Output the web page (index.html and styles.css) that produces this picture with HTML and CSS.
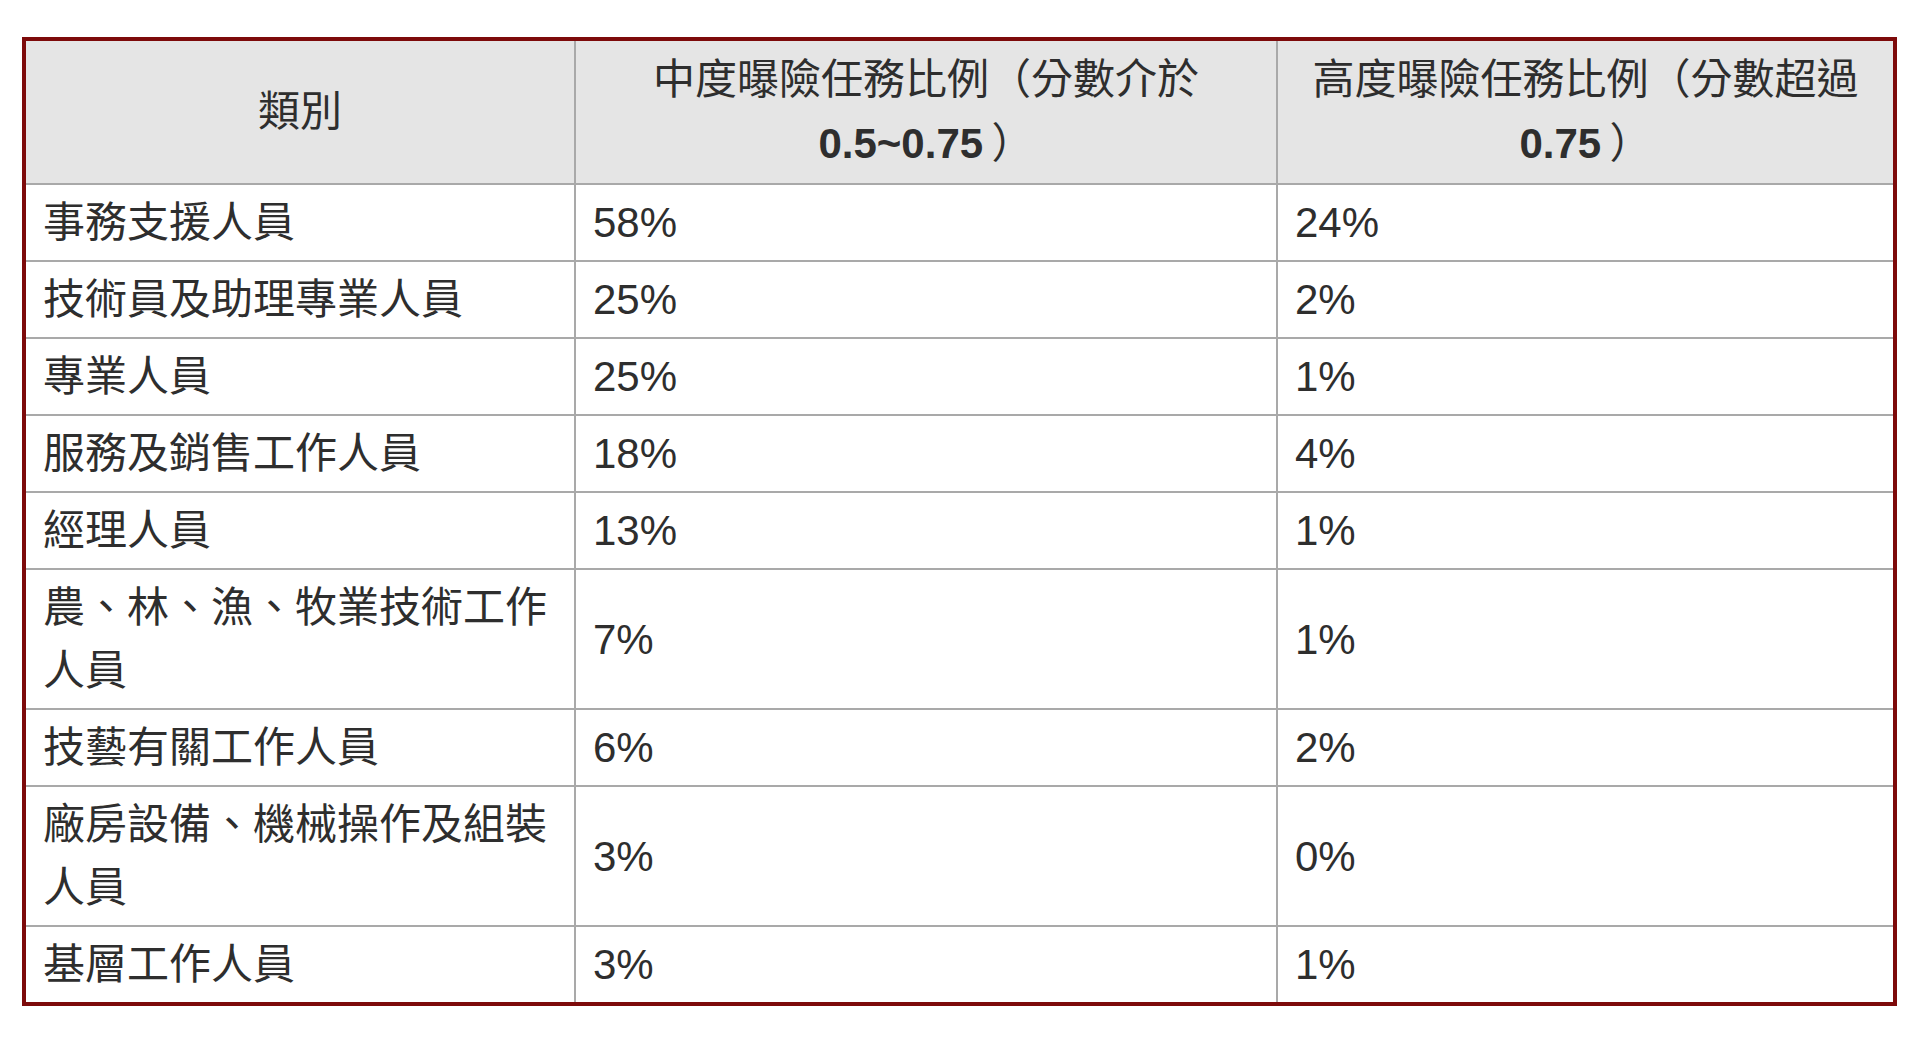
FILE: index.html
```html
<!DOCTYPE html>
<html lang="zh-Hant">
<head>
<meta charset="utf-8">
<title>曝險任務比例</title>
<link rel="stylesheet" href="styles.css">
</head>
<body>
<table class="data-table">
  <colgroup>
    <col class="col-cat">
    <col class="col-mid">
    <col class="col-high">
  </colgroup>
  <thead>
    <tr>
      <th>類別</th>
      <th>中度曝險任務比例（分數介於<span class="num">0.5~0.75</span><span class="close">）</span></th>
      <th>高度曝險任務比例（分數超過<span class="num">0.75</span><span class="close">）</span></th>
    </tr>
  </thead>
  <tbody>
    <tr><td>事務支援人員</td><td>58%</td><td>24%</td></tr>
    <tr><td>技術員及助理專業人員</td><td>25%</td><td>2%</td></tr>
    <tr><td>專業人員</td><td>25%</td><td>1%</td></tr>
    <tr><td>服務及銷售工作人員</td><td>18%</td><td>4%</td></tr>
    <tr><td>經理人員</td><td>13%</td><td>1%</td></tr>
    <tr><td>農、林、漁、牧業技術工作人員</td><td>7%</td><td>1%</td></tr>
    <tr><td>技藝有關工作人員</td><td>6%</td><td>2%</td></tr>
    <tr><td>廠房設備、機械操作及組裝人員</td><td>3%</td><td>0%</td></tr>
    <tr><td>基層工作人員</td><td>3%</td><td>1%</td></tr>
  </tbody>
</table>
</body>
</html>
```

FILE: styles.css
```css
html, body {
  margin: 0;
  padding: 0;
  background: #ffffff;
}

body {
  padding: 37px 0 0 22px;
  font-family: "Liberation Sans", "Noto Sans CJK TC", sans-serif;
  color: #2e2e2e;
  text-spacing-trim: space-all;
}

.data-table {
  border-collapse: collapse;
  table-layout: fixed;
  width: 1871px;
  border: 4px solid #7d0a0a;
  font-size: 42px;
}

.col-cat { width: 551px; }
.col-mid { width: 702px; }
.col-high { width: 618px; }

.data-table th,
.data-table td {
  border: 2px solid #a9a9a9;
  text-align: left;
  vertical-align: middle;
}

.data-table th {
  background: #e5e5e5;
  font-weight: normal;
  text-align: center;
  line-height: 64px;
  padding: 7px 16px;
}

.data-table th .num {
  font-weight: bold;
}

.data-table th .close {
  padding-left: 0.2em;
}

.data-table td {
  line-height: 63px;
  padding: 6px 17px;
}
```
